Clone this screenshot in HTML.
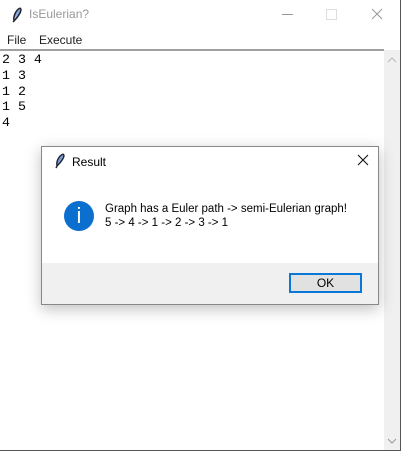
<!DOCTYPE html><html><head><style>
body{margin:0;width:401px;height:451px;overflow:hidden;background:#fff;font-family:"Liberation Sans",sans-serif;position:relative}
.a{position:absolute}
.mono{font-family:"Liberation Mono",monospace;font-size:13.3px;line-height:15.8px;color:#000}
</style></head><body>
<div class="a" style="left:0;top:0;width:400px;height:450px;border-right:1px solid #555;border-bottom:1px solid #555"></div>
<svg class="a" style="left:10px;top:7px" width="14" height="16"><path d="M10 1 C13 3 8 10 4 14 L3 15 M10 1 C6 3 3 9 4 14" stroke="#223" stroke-width="1.5" fill="#7aa0d8"/></svg>
<div class="a" style="left:29px;top:7px;font-size:12px;color:#999">IsEulerian?</div>
<div class="a" style="left:282px;top:14px;width:11px;height:1px;background:#999"></div>
<div class="a" style="left:326px;top:9px;width:9px;height:9px;border:1px solid #ddd"></div>
<svg class="a" style="left:371px;top:8px" width="12" height="12"><path d="M1 1L11 11M11 1L1 11" stroke="#999" stroke-width="1"/></svg>
<div class="a" style="left:7px;top:33px;font-size:12px;color:#222">File</div>
<div class="a" style="left:39px;top:33px;font-size:12px;color:#222">Execute</div>
<div class="a" style="left:0;top:49px;width:384px;height:2px;background:#a0a0a0"></div>
<div class="a" style="left:384px;top:50px;width:16px;height:400px;background:#f0f0f0"></div>
<svg class="a" style="left:387px;top:57px" width="10" height="6"><path d="M1 5L5 1L9 5" stroke="#bbb" fill="none"/></svg>
<svg class="a" style="left:387px;top:438px" width="10" height="6"><path d="M1 1L5 5L9 1" stroke="#999" fill="none"/></svg>
<div class="a mono" style="left:2px;top:52px;white-space:pre">2 3 4
1 3
1 2
1 5
4</div>
<div class="a" style="left:41px;top:146px;width:336px;height:157px;border:1px solid #888;background:#fff;box-shadow:0 4px 14px rgba(0,0,0,.25)">
<svg class="a" style="left:12px;top:6px" width="12" height="16"><path d="M9 1 C12 3 7 9 3 13 L2 15 M9 1 C5 3 2 8 3 13" stroke="#223" stroke-width="1.4" fill="#7aa0d8"/></svg>
<div class="a" style="left:30px;top:8px;font-size:12px;color:#000">Result</div>
<svg class="a" style="left:315px;top:7px" width="12" height="12"><path d="M1 1L11 11M11 1L1 11" stroke="#111" stroke-width="1.1"/></svg>
<div class="a" style="left:22px;top:54px;width:30px;height:30px;border-radius:50%;background:#0a6fcf;color:#fff;text-align:center;font-size:22px;line-height:30px">i</div>
<div class="a" style="left:63px;top:55px;font-size:11.5px;color:#000;line-height:14px">Graph has a Euler path -&gt; semi-Eulerian graph!<br>5 -&gt; 4 -&gt; 1 -&gt; 2 -&gt; 3 -&gt; 1</div>
<div class="a" style="left:0;top:116px;width:336px;height:41px;background:#f0f0f0"></div>
<div class="a" style="left:247px;top:126px;width:69px;height:16px;border:2px solid #0a78d7;background:#e1e1e1;text-align:center;font-size:12px;line-height:16px">OK</div>
</div>
</body></html>
